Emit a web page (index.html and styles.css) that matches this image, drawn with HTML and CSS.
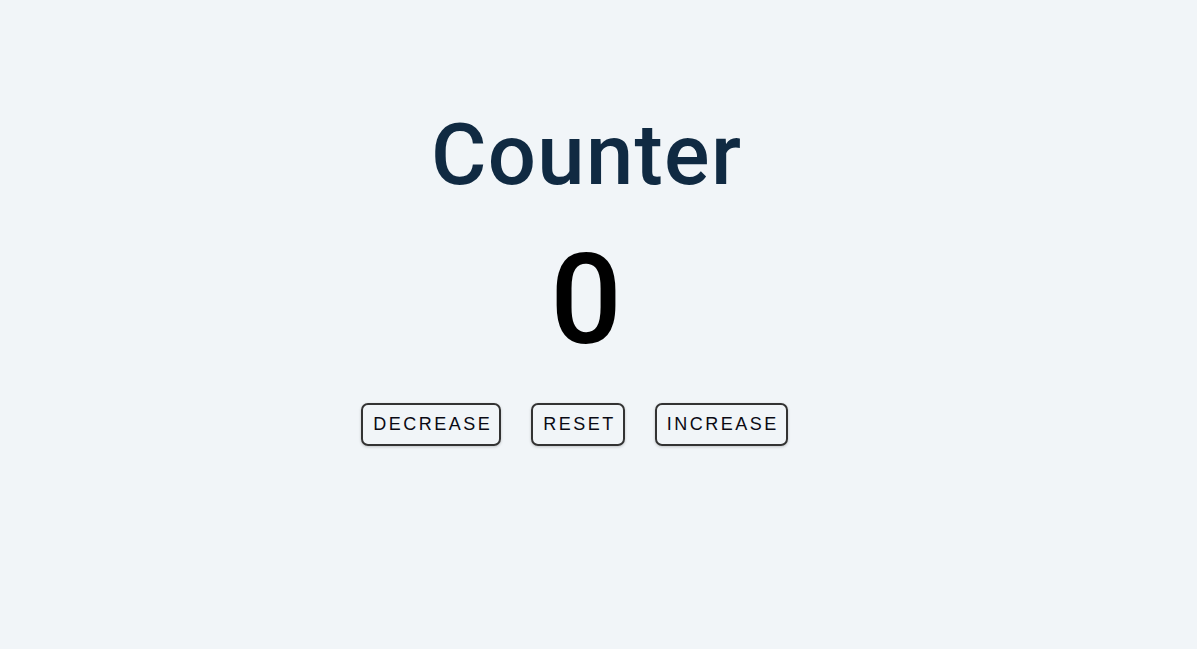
FILE: index.html
```html
<!DOCTYPE html>
<html lang="en">
<head>
<meta charset="utf-8">
<title>Counter</title>
<link rel="stylesheet" href="styles.css">
</head>
<body>
  <main class="page">
    <h1 class="title">Counter</h1>
    <span class="value">0</span>
    <div class="controls">
      <button class="btn">decrease</button>
      <button class="btn">reset</button>
      <button class="btn">increase</button>
    </div>
  </main>
</body>
</html>
```
FILE: styles.css
```css
html, body {
  margin: 0;
  padding: 0;
  background: #f1f5f8;
}

body {
  font-family: Roboto, "Liberation Sans", sans-serif;
  color: #102a42;
  min-height: 649px;
}

.page {
  width: 1172px;
  padding-top: 113px;
  display: flex;
  flex-direction: column;
  align-items: center;
}

.title {
  margin: 0;
  font-size: 85px;
  line-height: 1;
  font-weight: 500;
  letter-spacing: 1.3px;
  padding-left: 1.3px;
  color: #102a42;
}

.value {
  margin-top: 39px;
  font-size: 126px;
  line-height: 1;
  font-weight: 500;
  color: #000;
}

.controls {
  margin-top: 40px;
  display: flex;
  gap: 30px;
  padding-right: 23px;
}

.btn {
  font-family: "Liberation Sans", Arial, sans-serif;
  font-size: 18px;
  line-height: 21px;
  letter-spacing: 2.5px;
  text-transform: uppercase;
  color: #0a0a14;
  background: transparent;
  border: 2px solid #333;
  border-radius: 7px;
  padding: 9px 7px 9px 10px;
  box-shadow: 0 1px 3px rgba(0, 0, 0, 0.2);
  cursor: pointer;
}
```
